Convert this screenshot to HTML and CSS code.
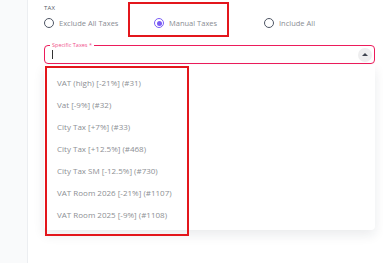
FILE: index.html
```html
<!DOCTYPE html>
<html lang="en">
<head>
    <meta charset="UTF-8">
    <meta name="viewport" content="width=device-width, initial-scale=1.0">
    <title>Tax</title>
    <link rel="stylesheet" href="styles.css">
</head>
<body>
    <div class="page">
        <aside class="side"></aside>
        <main class="content">
            <div class="field-label">TAX</div>
            <div class="radios">
                <label class="radio"><span class="ring"></span>Exclude All Taxes</label>
                <label class="radio checked"><span class="ring"></span>Manual Taxes</label>
                <label class="radio"><span class="ring"></span>Include All</label>
                <div class="mark mark-radio"></div>
            </div>
            <div class="select">
                <span class="float-label">Specific Taxes *</span>
                <span class="cursor"></span>
                <button class="toggle"></button>
            </div>
            <div class="menu-wrap">
                <ul class="menu">
                    <li>VAT (high) [-21%] (#31)</li>
                    <li>Vat [-9%] (#32)</li>
                    <li>City Tax [+7%] (#33)</li>
                    <li>City Tax [+12.5%] (#468)</li>
                    <li>City Tax SM [-12.5%] (#730)</li>
                    <li>VAT Room 2026 [-21%] (#1107)</li>
                    <li>VAT Room 2025 [-9%] (#1108)</li>
                </ul>
                <div class="mark mark-menu"></div>
            </div>
        </main>
    </div>
</body>
</html>
```

FILE: styles.css
```css
* {
    box-sizing: border-box;
}
body {
    margin: 0;
    background: #fff;
    font-family: "Open Sans", "Liberation Sans", sans-serif;
}
.page {
    display: flex;
    height: 263px;
}
.side {
    width: 28px;
    flex: none;
    background: #f9fafb;
    border-right: 1px solid #eceef1;
}
.content {
    flex: 1;
    padding: 4px 8px 0 16px;
}
.field-label {
    height: 8px;
    font-size: 6px;
    line-height: 8px;
    color: #555b66;
    letter-spacing: .2px;
}
.radios {
    position: relative;
    display: grid;
    grid-template-columns: 110px 110px 110px;
    height: 12px;
    margin-top: 5px;
}
.radio {
    display: flex;
    align-items: center;
    gap: 5px;
    font-size: 7.5px;
    color: #8a8d93;
}
.ring {
    width: 10px;
    height: 10px;
    border: 1.5px solid #4e5564;
    border-radius: 50%;
    display: flex;
    align-items: center;
    justify-content: center;
}
.checked .ring {
    border-color: #7a5cf5;
}
.checked .ring::before {
    content: '';
    width: 5px;
    height: 5px;
    border-radius: 50%;
    background: #7a5cf5;
}
.select {
    position: relative;
    display: flex;
    align-items: center;
    height: 19px;
    margin-top: 16px;
    padding: 0 2px 0 7px;
    border: 1px solid #ec1c5b;
    border-radius: 4px;
}
.float-label {
    position: absolute;
    left: 5px;
    top: -5px;
    padding: 0 2px;
    background: #fff;
    font-size: 5.5px;
    line-height: 8px;
    color: #f0508a;
}
.cursor {
    width: 1px;
    height: 9px;
    background: #333;
}
.toggle {
    margin-left: auto;
    width: 14px;
    height: 14px;
    border: 0;
    padding: 0;
    border-radius: 50%;
    background: #eeeeef;
    position: relative;
}
.toggle::before {
    content: '';
    position: absolute;
    left: 4px;
    top: 5px;
    border-left: 3px solid transparent;
    border-right: 3px solid transparent;
    border-bottom: 3px solid #3f4450;
}
.menu-wrap {
    position: relative;
    margin-top: 1px;
}
.menu {
    list-style: none;
    margin: 0;
    padding: 7px 0 4px;
    background: #fff;
    border-radius: 0 0 4px 4px;
    box-shadow: 0 5px 12px rgba(20, 30, 60, .09);
}
.menu li {
    height: 22px;
    line-height: 22px;
    padding-left: 13px;
    font-size: 8px;
    color: #8d8f94;
}
.mark {
    position: absolute;
    border: 2px solid #e3161c;
}
.mark-radio {
    left: 84px;
    top: -15px;
    width: 101px;
    height: 35px;
}
.mark-menu {
    left: 1px;
    top: 1px;
    width: 144px;
    height: 170px;
}
```
